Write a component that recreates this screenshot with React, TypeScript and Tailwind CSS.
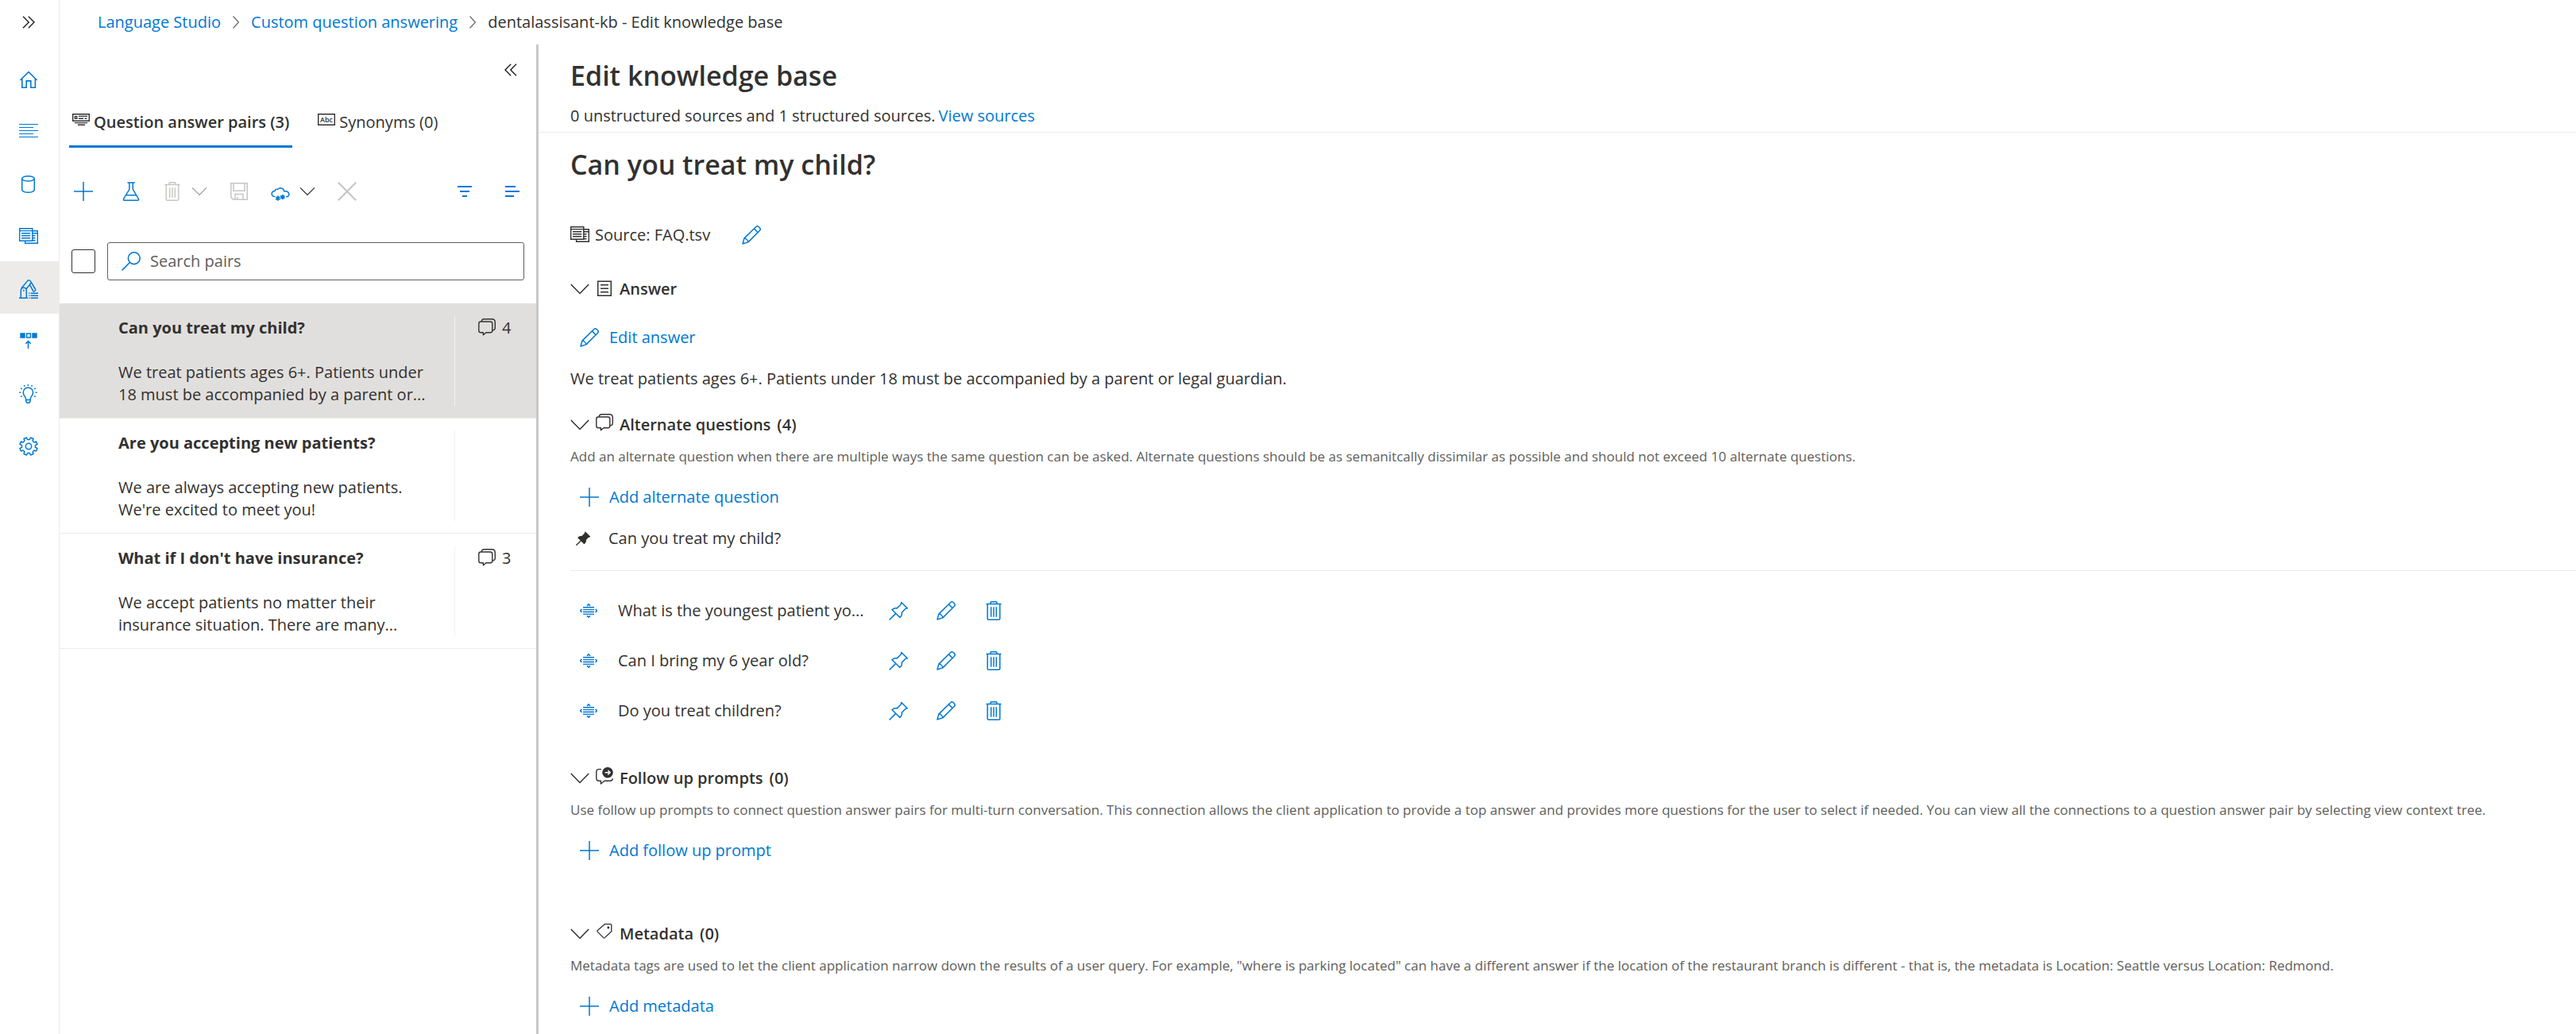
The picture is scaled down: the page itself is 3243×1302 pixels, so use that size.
import React from "react";

type IconProps = { className?: string };

function Svg({
  w = 24,
  h = 24,
  sw = 1.5,
  className = "",
  children,
}: {
  w?: number;
  h?: number;
  sw?: number;
  className?: string;
  children: React.ReactNode;
}) {
  return (
    <svg
      width={w}
      height={h}
      viewBox={`0 0 ${w} ${h}`}
      fill="none"
      stroke="currentColor"
      strokeWidth={sw}
      className={`shrink-0 ${className}`}
      aria-hidden="true"
    >
      {children}
    </svg>
  );
}

const HomeIcon = () => (
  <Svg sw={1.6}>
    <path d="M1.4 13 12 2.6 22.6 13M3.8 10.8v11.4h5.4v-8.3h5.6v8.3h5.6V10.8" />
  </Svg>
);

const LinesIcon = () => (
  <Svg sw={1}>
    <path d="M0 2.5h24M0 6.5h18M0 10.5h24M0 14.5h18M0 18.5h24" />
  </Svg>
);

const DatabaseIcon = () => (
  <Svg>
    <ellipse cx="11.5" cy="4.9" rx="7.8" ry="3.2" />
    <path d="M3.7 4.9v14.2c0 1.8 3.5 3.2 7.8 3.2s7.8-1.4 7.8-3.2V4.9" />
  </Svg>
);

const DocumentsIcon = () => (
  <Svg sw={1.4}>
    <path d="M.7 1.7h16.1v15.6H.7zM.7 4.6h16.1M3 7.7h11.3M3 10.7h11.3M3 13.7h11.3" />
    <path d="M16.8 4.7h6.5v15.6H7.6v-3M16.8 7.7h6.5M16.8 10.7h3.7M16.8 13.7h3.7M16.8 16.7h3.7" />
  </Svg>
);

const RobotArmIcon = () => (
  <Svg>
    <path d="M0 23.2h11M2.3 23V14c0-5 7-5 7 0v9" />
    <circle cx="5.8" cy="13.8" r="1" fill="currentColor" stroke="none" />
    <path d="M3 10.8 10.5 1.9c1-1.4 3.2-1.4 4 .2l6.2 10.4M9.2 11.8l4.3-5.4 4.3 8.2M13.5 6.4l1.7-3.6" />
    <path d="M17.8 14.6c.6.9 3.4-.7 2.9-2.1" />
    <path d="M14.6 17.3H24M14.6 20.2H24M14.6 23.2H24" />
    <path d="M12.2 17.3h1.2M12.2 20.2h1.2M12.2 23.2h1.2" />
  </Svg>
);

const DeployIcon = () => (
  <Svg>
    <path d="M1.3 1.3h6.4v6.4H1.3zM16.3 1.3h6.4v6.4h-6.4z" fill="currentColor" stroke="none" />
    <path d="M9.6 2h4.8v5H9.6zM11.5 21V11.6M8.3 14.8l3.2-3.2 3.2 3.2" />
  </Svg>
);

const BulbIcon = () => (
  <Svg>
    <path d="M8.8 19.4c0-3.8-3.6-5.2-3.6-9.2a6.2 6.2 0 0 1 12.4 0c0 4-3.6 5.4-3.6 9.2z" />
    <path d="M8.8 19.4v2.2l1.2 1.6h2.8l1.2-1.6v-2.2" />
    <path d="M11.4 0v2M6.4.9l.7 1.8M16.4.9l-.7 1.8M2 4.8l1.8 1M20.8 4.8l-1.8 1M.2 10.2h2M20.6 10.2h2M2 15.6l1.8-1M20.8 15.6l-1.8-1" />
  </Svg>
);

const gearPath = (() => {
  const pts: string[] = [];
  for (let i = 0; i < 8; i++) {
    const mid = (i * 45 + 22.5) * (Math.PI / 180);
    const steps: [number, number][] = [
      [8.6, -0.23],
      [11.3, -0.17],
      [11.3, 0.17],
      [8.6, 0.23],
    ];
    for (const [r, a] of steps) {
      pts.push(`${(12 + r * Math.cos(mid + a)).toFixed(2)} ${(12 + r * Math.sin(mid + a)).toFixed(2)}`);
    }
  }
  return `M${pts.join("L")}Z`;
})();

const GearIcon = () => (
  <Svg>
    <path d={gearPath} strokeLinejoin="round" />
    <circle cx="12" cy="12" r="3.7" />
  </Svg>
);

const DoubleChevron = ({ flip = false }: { flip?: boolean }) => (
  <Svg w={16} h={16} sw={1.4}>
    <path d={flip ? "M8.2.8 1 8l7.2 7.2M15 .8 7.8 8l7.2 7.2" : "M1 .8 8.2 8 1 15.2M7.8.8 15 8l-7.2 7.2"} />
  </Svg>
);

const CrumbChevron = () => (
  <Svg w={8} h={16} sw={1.1} className="text-[#605e5c]">
    <path d="M.5.5 7.5 8l-7 7.5" />
  </Svg>
);

const PairsIcon = () => (
  <Svg w={22} h={22} sw={1.4}>
    <path d="M.7.7h20.6v8.6H.7z" />
    <path d="M3.4 3.6h2.4v2.8H3.4zM8 3.4h11M8 6.2h6M15.6 6.2h2.6M3 11.6h16M7 14.3h9" />
  </Svg>
);

const AbcIcon = () => (
  <Svg w={22} h={22} sw={1.4}>
    <path d="M.7.7h20.6v13.6H.7z" />
    <text
      x="11"
      y="11"
      textAnchor="middle"
      fill="currentColor"
      stroke="none"
      fontSize="9"
      fontWeight="600"
      fontFamily="Open Sans, sans-serif"
    >
      Abc
    </text>
  </Svg>
);

const PlusIcon = () => (
  <Svg sw={1.5}>
    <path d="M12 0v24M0 12h24" />
  </Svg>
);

const FlaskIcon = () => (
  <Svg>
    <path d="M7.4 1h9.4M9.9 1v8.4L2.8 21.2c-.7 1.2-.2 2.1 1 2.1h16.4c1.2 0 1.7-.9 1-2.1L14.3 9.4V1M5.6 16.8h13" />
  </Svg>
);

const TrashIcon = () => (
  <Svg>
    <path d="M2.5 3.5h19M8 3.5V2c0-.7.4-1.2 1.1-1.2h5.8c.7 0 1.1.5 1.1 1.2v1.5M4.2 3.5v18.4c0 .8.5 1.3 1.3 1.3h13c.8 0 1.3-.5 1.3-1.3V3.5" />
    <path d="M8.7 7.2v12.6M12 7.2v12.6M15.3 7.2v12.6" />
  </Svg>
);

const SaveIcon = () => (
  <Svg>
    <path d="M1.8 1.8h20.4v20.4H4.6l-2.8-2.8zM5 1.8v9.4h14V1.8M7 22.2v-6.6h10v6.6M10 22v-3" />
  </Svg>
);

const CloudIcon = () => (
  <Svg>
    <path d="M5.2 18.6C-.2 18.2-.2 11.6 5 11.6c.2-1.8 2-2.8 3.7-2.2 2.3-3 7.6-1.6 8 2.3 7.6-.6 8 7.4 2.4 7" />
    <path
      d="M8.8 17.6v6.2M6.1 19.1l5.4 3.2M11.5 19.1l-5.4 3.2M14.8 16v6.2M12.1 17.5l5.4 3.2M17.5 17.5l-5.4 3.2"
      strokeWidth="1.7"
    />
  </Svg>
);

const SmallChevron = () => (
  <Svg w={20} h={20} sw={1.3}>
    <path d="m1 5.4 9 9 9-9" />
  </Svg>
);

const CloseIcon = () => (
  <Svg sw={2.2}>
    <path d="m.8.8 22.4 22.4M23.2.8.8 23.2" />
  </Svg>
);

const FilterIcon = () => (
  <Svg sw={2}>
    <path d="M3 6h18M6 12h12M9 18h6" />
  </Svg>
);

const AlignIcon = () => (
  <Svg sw={2}>
    <path d="M3 6h13M3 12h18M3 18h11" />
  </Svg>
);

const SearchIcon = () => (
  <Svg sw={1.6} className="text-[#0078d4]">
    <circle cx="15.8" cy="8.2" r="7.4" />
    <path d="M10.4 13.5.6 23.4" />
  </Svg>
);

const CommentIcon = ({ className }: IconProps) => (
  <Svg w={22} h={24} sw={1.4} className={className}>
    <path
      d="M3.4 4h11.8c1.6 0 2.6 1 2.6 2.6v8.6c0 1.6-1 2.6-2.6 2.6H10l-3.6 3v-3h-3C1.8 17.8.8 16.8.8 15.2V6.6C.8 5 1.8 4 3.4 4z"
      strokeLinejoin="round"
    />
    <path d="M4.2 3.8C4.400 1.900 5.500.8 7.400.8h9.800c2.600 0 4.100 1.500 4.100 4.100v6.900c0 1.900-1.200 3.100-3.400 3.300" />
  </Svg>
);

const FollowUpIcon = ({ className }: IconProps) => (
  <Svg w={22} h={24} sw={1.4} className={className}>
    <path
      d="M7 2.600H4C2 2.600.8 3.800.8 5.800v8.200c0 2 1.200 3.200 3.200 3.200h2.400V21l4.600-3.800h7.200c2 0 3-1 3-3"
      strokeLinejoin="round"
    />
    <circle cx="15" cy="6.8" r="6.8" fill="currentColor" stroke="none" />
    <path d="M11.600 6.800h6.200M15.300 4l2.800 2.800-2.800 2.800" stroke="#fff" />
  </Svg>
);

const TagIcon = ({ className }: IconProps) => (
  <Svg w={22} h={24} sw={1.3} className={className}>
    <path
      d="M11.200 1.700h7.200c.9 0 1.400.5 1.400 1.400v7.600l-8.300 7.900c-.6.6-1.300.6-1.900 0L2.400 11.400c-.6-.6-.6-1.300 0-1.900z"
      strokeLinejoin="round"
    />
    <circle cx="15.8" cy="5.9" r="1.5" fill="currentColor" stroke="none" />
  </Svg>
);

const AnswerIcon = ({ className }: IconProps) => (
  <Svg w={22} h={24} sw={1.5} className={className}>
    <path d="M2.700 4.200h16.600v18H2.700zM6 8.700h10M6 13.200h10M6 17.700h10" />
  </Svg>
);

const PencilIcon = () => (
  <Svg>
    <path
      d="M1 23l1.900-6.900L17.500 1.700a2.700 2.700 0 0 1 3.800 0l1 1a2.700 2.700 0 0 1 0 3.800L7.900 20.900zM15.300 3.900l4.800 4.800M2.900 16.100c2.200.2 4.600 2.300 5 4.800"
      strokeLinejoin="round"
    />
  </Svg>
);

const pinShape =
  "M15.7 1.5 23.3 9c-1.8-.3-2.6.4-3.2 1.2L16.2 14.5c.8 2.5-.3 4.400-2.400 6L4 10.800c1.900-1.800 3.800-2.500 6.200-1.900l4.300-4.200c.8-.9 1.400-1.800 1.200-3.200z";

const PinIcon = () => (
  <Svg>
    <path d={pinShape} strokeLinejoin="round" />
    <path d="M8.600 15.600.6 23.500" />
  </Svg>
);

const PinFilledIcon = () => (
  <svg width="18" height="18" viewBox="0 0 24 24" stroke="currentColor" strokeWidth="1.8" className="shrink-0" aria-hidden="true">
    <path d={pinShape} fill="currentColor" strokeLinejoin="round" />
    <path d="M8.600 15.600.6 23.500" />
  </svg>
);

const DragIcon = () => (
  <Svg w={22} h={18} sw={1.4}>
    <path d="M4 4.700h14M4 7.600h14M4 10.500h14M4 13.400h14" />
    <path d="m9 2.900 2-2 2 2M9 15.300l2 2 2-2M2.400 7 .6 9l1.800 2M19.600 7l1.800 2-1.800 2" strokeWidth="1.6" />
  </Svg>
);

const BigChevron = () => (
  <Svg sw={1.5}>
    <path d="m.8 6 11.200 11.500L23.200 6" />
  </Svg>
);

const NAV = [
  { label: "Home", icon: <HomeIcon /> },
  { label: "Overview", icon: <LinesIcon /> },
  { label: "Data", icon: <DatabaseIcon /> },
  { label: "Manage sources", icon: <DocumentsIcon /> },
  { label: "Edit knowledge base", icon: <RobotArmIcon />, selected: true },
  { label: "Deploy knowledge base", icon: <DeployIcon /> },
  { label: "Review suggestions", icon: <BulbIcon /> },
  { label: "Project settings", icon: <GearIcon /> },
];

const PAIRS = [
  {
    question: "Can you treat my child?",
    answer: "We treat patients ages 6+. Patients under 18 must be accompanied by a parent or...",
    count: 4,
    selected: true,
  },
  {
    question: "Are you accepting new patients?",
    answer: "We are always accepting new patients. We're excited to meet you!",
  },
  {
    question: "What if I don't have insurance?",
    answer: "We accept patients no matter their insurance situation. There are many...",
    count: 3,
  },
];

const ALTERNATES = ["What is the youngest patient yo...", "Can I bring my 6 year old?", "Do you treat children?"];

function SideNav() {
  return (
    <nav aria-label="Project" className="w-[75px] shrink-0 border-r border-[#edebe9] text-[#0078d4]">
      <div className="flex h-[65px] items-start pl-7 pt-5">
        <button aria-label="Expand navigation" className="text-[#201f1e]">
          <DoubleChevron />
        </button>
      </div>
      <ul>
        {NAV.map((item) => (
          <li key={item.label}>
            <a
              href="#"
              aria-label={item.label}
              aria-current={item.selected ? "page" : undefined}
              className={`flex h-[66px] items-center pl-6 pt-1 ${item.selected ? "bg-[#edebe9]" : ""}`}
            >
              {item.icon}
            </a>
          </li>
        ))}
      </ul>
    </nav>
  );
}

function Breadcrumb() {
  return (
    <nav aria-label="Breadcrumb" className="flex h-14 shrink-0 items-center gap-[15px] pl-12">
      <a href="#" className="text-[#0078d4]">Language Studio</a>
      <CrumbChevron />
      <a href="#" className="text-[#0078d4]">Custom question answering</a>
      <CrumbChevron />
      <span aria-current="page">dentalassisant-kb - Edit knowledge base</span>
    </nav>
  );
}

function Toolbar() {
  return (
    <div role="toolbar" aria-label="Pair actions" className="flex h-[110px] items-center gap-7 px-[18px] text-[#0078d4]">
      <button aria-label="Add pair" className="mr-2"><PlusIcon /></button>
      <button aria-label="Test"><FlaskIcon /></button>
      <button aria-label="Delete" disabled className="flex items-center gap-3 text-[#c8c6c4]">
        <TrashIcon />
        <span className="text-[#a19f9d]"><SmallChevron /></span>
      </button>
      <button aria-label="Save" disabled className="text-[#c8c6c4]"><SaveIcon /></button>
      <button aria-label="Export options" className="flex items-center gap-3">
        <CloudIcon />
        <span className="text-[#323130]"><SmallChevron /></span>
      </button>
      <button aria-label="Cancel" disabled className="text-[#c8c6c4]"><CloseIcon /></button>
      <div className="ml-auto flex items-center gap-9">
        <button aria-label="Filter"><FilterIcon /></button>
        <button aria-label="View options"><AlignIcon /></button>
      </div>
    </div>
  );
}

function PairsPanel() {
  return (
    <aside className="w-[603px] shrink-0 border-r-3 border-[#c8c8c8]">
      <div className="flex h-16 items-center justify-end pr-6">
        <button aria-label="Collapse panel" className="text-[#201f1e]"><DoubleChevron flip /></button>
      </div>
      <div role="tablist" className="flex h-[66px] gap-7 pl-3">
        <button role="tab" aria-selected="true" className="flex items-center gap-[5px] border-b-3 border-[#0078d4] px-1 pt-[5px] font-semibold">
          <PairsIcon />
          Question answer pairs (3)
        </button>
        <button role="tab" aria-selected="false" className="flex items-center gap-[5px] border-b-3 border-transparent px-1 pt-[5px]">
          <AbcIcon />
          Synonyms (0)
        </button>
      </div>
      <Toolbar />
      <div className="mb-[29px] mt-[9px] flex h-12 items-center gap-[15px] px-[15px]">
        <input type="checkbox" aria-label="Select all pairs" className="size-[30px] shrink-0 appearance-none rounded-[3px] border border-[#323130]" />
        <label className="flex h-12 flex-1 items-center gap-3 rounded-[3px] border border-[#605e5c] pl-[17px]">
          <SearchIcon />
          <input type="search" aria-label="Search pairs" placeholder="Search pairs" className="min-w-0 flex-1 bg-transparent outline-none placeholder:text-[#605e5c]" />
        </label>
      </div>
      <ul>
        {PAIRS.map((p) => (
          <li key={p.question} className={`flex border-b border-[#edebe9] py-[15px] ${p.selected ? "bg-[#e1dfdd]" : ""}`}>
            <div className="w-[498px] border-r border-[#f3f2f1] pl-[74px] pt-0.5">
              <h3 className="font-bold">{p.question}</h3>
              <p className="mt-7 w-[400px]">{p.answer}</p>
            </div>
            {p.count !== undefined && (
              <div className="flex items-start gap-2 pl-[29px] pt-0.5">
                <CommentIcon className="mt-0.5" />
                <span>{p.count}</span>
              </div>
            )}
          </li>
        ))}
      </ul>
    </aside>
  );
}

function SectionTitle({ icon, title, count }: { icon: React.ReactNode; title: string; count?: number }) {
  return (
    <h3 className="font-semibold">
      <button aria-expanded="true" className="flex h-7 items-center gap-2">
        <BigChevron />
        <span className="self-start">{icon}</span>
        <span>{title}</span>
        {count !== undefined && <span>({count})</span>}
      </button>
    </h3>
  );
}

function ActionLink({ icon, children }: { icon: React.ReactNode; children: React.ReactNode }) {
  return (
    <button className="ml-3 flex items-center gap-[13px] text-[#0078d4]">
      {icon}
      {children}
    </button>
  );
}

function Hint({ children }: { children: React.ReactNode }) {
  return <p className="mb-[25px] mt-[14px] text-[17px] leading-6 text-[#605e5c]">{children}</p>;
}

function Editor() {
  return (
    <main className="min-w-0 flex-1 pb-5">
      <header className="border-b border-[#edebe9] pb-[6px] pl-10 pt-[15px]">
        <h1 className="text-[34px] font-semibold leading-[48px]">Edit knowledge base</h1>
        <p className="mt-[13px] flex gap-1">
          0 unstructured sources and 1 structured sources.
          <a href="#" className="text-[#0078d4]">View sources</a>
        </p>
      </header>
      <div className="pl-10 pt-4">
        <h2 className="text-[34px] font-semibold leading-[48px]">Can you treat my child?</h2>
        <div className="mt-[51px] flex h-7 items-center">
          <DocumentsIcon />
          <span className="ml-[7px]">Source: FAQ.tsv</span>
          <button aria-label="Edit source" className="ml-10 text-[#0078d4]"><PencilIcon /></button>
        </div>

        <section className="mt-10">
          <SectionTitle icon={<AnswerIcon />} title="Answer" />
          <div className="mt-[33px]">
            <ActionLink icon={<PencilIcon />}>Edit answer</ActionLink>
          </div>
          <p className="mt-6">We treat patients ages 6+. Patients under 18 must be accompanied by a parent or legal guardian.</p>
        </section>

        <section className="mt-[30px]">
          <SectionTitle icon={<CommentIcon />} title="Alternate questions" count={4} />
          <Hint>
            Add an alternate question when there are multiple ways the same question can be asked. Alternate questions should be as
            semanitcally dissimilar as possible and should not exceed 10 alternate questions.
          </Hint>
          <ActionLink icon={<PlusIcon />}>Add alternate question</ActionLink>
          <div className="mt-6 flex items-center gap-[23px] border-b border-[#edebe9] pb-[26px] pl-[7px]">
            <PinFilledIcon />
            Can you treat my child?
          </div>
          <ul className="mt-[18px]">
            {ALTERNATES.map((q) => (
              <li key={q} className="flex h-[63px] items-center pl-3">
                <button aria-label="Reorder" className="w-12 text-[#0078d4]"><DragIcon /></button>
                <span className="w-[341px]">{q}</span>
                <div className="flex gap-9 text-[#0078d4]">
                  <button aria-label={`Pin ${q}`}><PinIcon /></button>
                  <button aria-label={`Edit ${q}`}><PencilIcon /></button>
                  <button aria-label={`Delete ${q}`}><TrashIcon /></button>
                </div>
              </li>
            ))}
          </ul>
        </section>

        <section className="mt-10">
          <SectionTitle icon={<FollowUpIcon />} title="Follow up prompts" count={0} />
          <Hint>
            Use follow up prompts to connect question answer pairs for multi-turn conversation. This connection allows the client
            application to provide a top answer and provides more questions for the user to select if needed. You can view all the
            connections to a question answer pair by selecting view context tree.
          </Hint>
          <ActionLink icon={<PlusIcon />}>Add follow up prompt</ActionLink>
        </section>

        <section className="mt-[77px]">
          <SectionTitle icon={<TagIcon />} title="Metadata" count={0} />
          <Hint>
            Metadata tags are used to let the client application narrow down the results of a user query. For example, "where is parking
            located" can have a different answer if the location of the restaurant branch is different - that is, the metadata is
            Location: Seattle versus Location: Redmond.
          </Hint>
          <ActionLink icon={<PlusIcon />}>Add metadata</ActionLink>
        </section>
      </div>
    </main>
  );
}

export default function App() {
  return (
    <div className="flex min-h-screen bg-white font-['Open_Sans',sans-serif] text-[20px] leading-7 text-[#323130]">
      <SideNav />
      <div className="flex min-w-0 flex-1 flex-col">
        <Breadcrumb />
        <div className="flex flex-1">
          <PairsPanel />
          <Editor />
        </div>
      </div>
    </div>
  );
}
